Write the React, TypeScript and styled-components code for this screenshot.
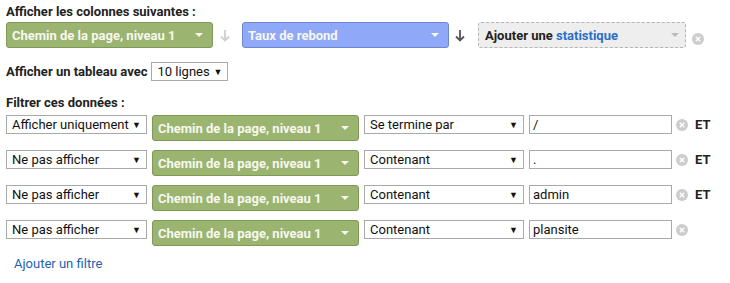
import React from "react";
import styled, { createGlobalStyle } from "styled-components";

const Global = createGlobalStyle`
  html, body { margin: 0; padding: 0; background: #fff; }
  body { font-family: Roboto, "Liberation Sans", Arial, sans-serif; color: #222; }
`;

const Wrapper = styled.div`
  padding: 4px 6px 0 6px;
  width: 730px;
  box-sizing: border-box;
`;

const Label = styled.div<{ $mt?: number; $mb?: number }>`
  font-size: 13px;
  font-weight: 700;
  line-height: 16px;
  color: #222;
  margin-top: ${(p) => p.$mt ?? 0}px;
  margin-bottom: ${(p) => p.$mb ?? 0}px;
`;

const ColumnsRow = styled.div`
  display: flex;
  align-items: center;
  height: 26px;
`;

const Pill = styled.div<{ $tone: "green" | "blue"; $w: number }>`
  display: flex;
  align-items: center;
  justify-content: space-between;
  box-sizing: border-box;
  width: ${(p) => p.$w}px;
  height: 26px;
  padding: 0 9px 0 5px;
  border-radius: 3px;
  background: ${(p) => (p.$tone === "green" ? "#9bb46f" : "#8fa9f8")};
  border: 1px solid ${(p) => (p.$tone === "green" ? "#7f9958" : "#6f86cf")};
  color: #f6f8f0;
  font-size: 13px;
  font-weight: 700;
  flex-shrink: 0;
`;

const Caret = styled.span<{ $color: string }>`
  width: 0;
  height: 0;
  border-left: 4px solid transparent;
  border-right: 4px solid transparent;
  border-top: 4px solid ${(p) => p.$color};
`;

const ArrowWrap = styled.span<{ $mx: string }>`
  display: inline-flex;
  margin: ${(p) => p.$mx};
`;

const Arrow = ({ color, mx }: { color: string; mx: string }) => (
  <ArrowWrap $mx={mx}>
    <svg width="10" height="13" viewBox="0 0 10 13">
      <path d="M5 1 V11.5 M1 7.5 L5 11.5 L9 7.5" stroke={color} strokeWidth="1.8" fill="none" />
    </svg>
  </ArrowWrap>
);

const AddBox = styled.div`
  display: flex;
  align-items: center;
  justify-content: space-between;
  box-sizing: border-box;
  width: 208px;
  height: 26px;
  padding: 0 6px 0 6px;
  border: 1px dashed #b4b4b4;
  border-radius: 3px;
  background: #eeeeee;
  font-size: 13px;
  font-weight: 700;
  color: #222;
`;

const Blue = styled.span`
  color: #2a6fc9;
`;

const ClearWrap = styled.span<{ $ml: number; $mt?: number }>`
  display: inline-flex;
  margin-left: ${(p) => p.$ml}px;
  margin-top: ${(p) => p.$mt ?? 0}px;
`;

const Clear = ({ ml, mt }: { ml: number; mt?: number }) => (
  <ClearWrap $ml={ml} $mt={mt}>
    <svg width="12" height="12" viewBox="0 0 12 12">
      <circle cx="6" cy="6" r="6" fill="#cdcdcd" />
      <path d="M3.8 3.8 L8.2 8.2 M8.2 3.8 L3.8 8.2" stroke="#fff" strokeWidth="1.3" />
    </svg>
  </ClearWrap>
);

const TableRow = styled.div`
  display: flex;
  align-items: center;
  margin-top: 14px;
  gap: 4px;
`;

const SelectBox = styled.div<{ $w: number }>`
  display: flex;
  align-items: center;
  justify-content: space-between;
  box-sizing: border-box;
  width: ${(p) => p.$w}px;
  height: 19px;
  padding: 0 5px 0 5px;
  border: 1px solid #a9a9a9;
  background: #fff;
  font-size: 13px;
  color: #111;
  flex-shrink: 0;
`;

const SelArrow = styled.span`
  font-size: 9px;
  color: #111;
`;

const TextInput = styled.div`
  box-sizing: border-box;
  width: 143px;
  height: 19px;
  padding: 0 3px;
  border: 1px solid #a9a9a9;
  background: #fff;
  font-size: 13px;
  line-height: 17px;
  color: #111;
  flex-shrink: 0;
`;

const FilterList = styled.div`
  display: flex;
  flex-direction: column;
  gap: 9px;
`;

const FilterRow = styled.div`
  display: flex;
  align-items: flex-start;
`;

const Gap = styled.span<{ $w: number }>`
  width: ${(p) => p.$w}px;
  flex-shrink: 0;
`;

const Et = styled.span`
  font-size: 13px;
  font-weight: 700;
  line-height: 19px;
  margin-left: 7px;
  color: #222;
`;

const AddLink = styled.a`
  display: block;
  margin: 10px 0 0 8px;
  font-size: 13px;
  line-height: 16px;
  color: #1e62b0;
  text-decoration: none;
`;

const filters = [
  { mode: "Afficher uniquement", cond: "Se termine par", value: "/", et: true },
  { mode: "Ne pas afficher", cond: "Contenant", value: ".", et: true },
  { mode: "Ne pas afficher", cond: "Contenant", value: "admin", et: true },
  { mode: "Ne pas afficher", cond: "Contenant", value: "plansite", et: false },
];

export default function App() {
  return (
    <>
      <Global />
      <Wrapper>
        <Label $mb={2}>Afficher les colonnes suivantes :</Label>
        <ColumnsRow>
          <Pill $tone="green" $w={207}>
            Chemin de la page, niveau 1
            <Caret $color="#f6f8f0" />
          </Pill>
          <Arrow color="#cfcfcf" mx="0 12px 0 7px" />
          <Pill $tone="blue" $w={207}>
            Taux de rebond
            <Caret $color="#f6f8ff" />
          </Pill>
          <Arrow color="#555" mx="0 13px 0 6px" />
          <AddBox>
            <span>
              Ajouter une <Blue>statistique</Blue>
            </span>
            <Caret $color="#bbb" />
          </AddBox>
          <Clear ml={6} mt={8} />
        </ColumnsRow>
        <TableRow>
          <Label>Afficher un tableau avec</Label>
          <SelectBox $w={77}>
            10 lignes
            <SelArrow>▼</SelArrow>
          </SelectBox>
        </TableRow>
        <Label $mt={14} $mb={4}>Filtrer ces données :</Label>
        <FilterList>
          {filters.map((f, i) => (
            <FilterRow key={i}>
              <SelectBox $w={141}>
                {f.mode}
                <SelArrow>▼</SelArrow>
              </SelectBox>
              <Gap $w={5} />
              <Pill $tone="green" $w={207}>
                Chemin de la page, niveau 1
                <Caret $color="#f6f8f0" />
              </Pill>
              <Gap $w={5} />
              <SelectBox $w={160}>
                {f.cond}
                <SelArrow>▼</SelArrow>
              </SelectBox>
              <Gap $w={5} />
              <TextInput>{f.value}</TextInput>
              <Clear ml={4} mt={4} />
              {f.et && <Et>ET</Et>}
            </FilterRow>
          ))}
        </FilterList>
        <AddLink href="#">Ajouter un filtre</AddLink>
      </Wrapper>
    </>
  );
}
